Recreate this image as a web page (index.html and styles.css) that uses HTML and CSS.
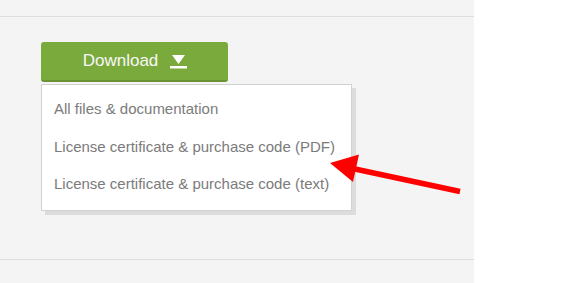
FILE: index.html
```html
<!DOCTYPE html>
<html>
<head>
<meta charset="utf-8">
<link rel="stylesheet" href="styles.css">
</head>
<body>
<div class="page">
  <div class="panel">
    <div class="section">
      <div class="dropdown">
        <button class="btn">
          <span class="btn-label">Download</span>
          <svg class="btn-icon" width="17" height="14" viewBox="0 0 17 14">
            <polygon points="2,0 15,0 8.5,9" fill="#ffffff"/>
            <rect x="0" y="11" width="17" height="2.5" fill="#ffffff"/>
          </svg>
        </button>
        <ul class="menu">
          <li class="menu-item">All files &amp; documentation</li>
          <li class="menu-item">License certificate &amp; purchase code (PDF)</li>
          <li class="menu-item">License certificate &amp; purchase code (text)</li>
        </ul>
      </div>
    </div>
  </div>
  <svg class="pointer" width="584" height="283" viewBox="0 0 584 283">
    <line x1="355" y1="169" x2="460" y2="191.5" stroke="#ff0000" stroke-width="5.5"/>
    <polygon points="330,163 359,154.5 353,182" fill="#ff0000"/>
  </svg>
</div>
</body>
</html>
```

FILE: styles.css
```css
html, body {
  margin: 0;
  padding: 0;
  background: #ffffff;
}

.page {
  position: relative;
  width: 584px;
  height: 283px;
  overflow: hidden;
  font-family: "Liberation Sans", Arial, sans-serif;
}

.panel {
  width: 474px;
  height: 283px;
  background: #f4f4f4;
  padding-top: 16px;
  box-sizing: border-box;
}

.section {
  border-top: 1px solid #dedede;
  border-bottom: 1px solid #dedede;
  height: 244px;
  box-sizing: border-box;
  padding: 25px 0 0 41px;
}

.dropdown {
  position: relative;
  width: 187px;
}

.btn {
  display: flex;
  align-items: center;
  justify-content: center;
  gap: 12px;
  width: 187px;
  height: 40px;
  margin: 0;
  padding: 0 0 0 1px;
  border: none;
  border-bottom: 2px solid #6a9433;
  border-radius: 3px;
  background: #7aa93c;
  color: #f8f8f8;
  font-family: "Liberation Sans", Arial, sans-serif;
  font-size: 17px;
  box-sizing: border-box;
}

.btn-label {
  line-height: 20px;
}

.btn-icon {
  display: block;
  margin-top: 1px;
}

.menu {
  position: absolute;
  top: 42px;
  left: 0;
  width: 311px;
  margin: 0;
  padding: 5px 0 7px;
  list-style: none;
  background: #ffffff;
  border: 1px solid #d2d2d2;
  box-shadow: 4px 4px 0 #dcdcdc;
  box-sizing: border-box;
}

.menu-item {
  padding-left: 12px;
  line-height: 37.5px;
  font-size: 15px;
  color: #7b7b7b;
  white-space: nowrap;
}

.pointer {
  position: absolute;
  top: 0;
  left: 0;
}
```
